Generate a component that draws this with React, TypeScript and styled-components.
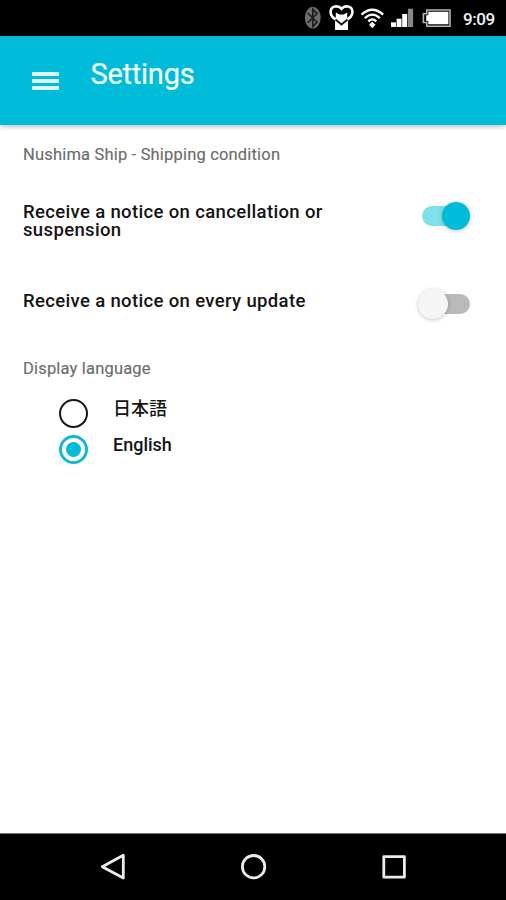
import React, { useState } from 'react';
import styled, { createGlobalStyle } from 'styled-components';

const GlobalStyle = createGlobalStyle`
  * { box-sizing: border-box; }
  body { margin: 0; background: #fff; font-family: Roboto, "Noto Sans CJK JP", sans-serif; }
`;

const Screen = styled.div`
  width: 506px;
  height: 900px;
  display: flex;
  flex-direction: column;
  background: #fff;
  overflow: hidden;
`;

const StatusBar = styled.div`
  height: 36px;
  flex: none;
  display: flex;
  align-items: flex-start;
  padding-left: 304px;
  background: #000;
`;

const StatusIcon = styled.svg<{ $gap: number }>`
  display: block;
  flex: none;
  height: 36px;
  margin-right: ${(p) => p.$gap}px;
`;

const Clock = styled.span`
  color: #f2f2f2;
  font-size: 17px;
  font-weight: 500;
  line-height: 38px;
  letter-spacing: -0.45px;
`;

const AppBar = styled.header`
  height: 89px;
  flex: none;
  display: flex;
  align-items: flex-start;
  padding: 20px 0 0 32px;
  background: #00bcd9;
  box-shadow: 0 1px 5px rgba(0, 0, 0, 0.32);
`;

const MenuButton = styled.button`
  width: 27px;
  height: 20px;
  margin-top: 15.5px;
  padding: 0;
  border: 0;
  background: none;
  display: flex;
  flex-direction: column;
  gap: 3.4px;
`;

const MenuLine = styled.span`
  width: 27px;
  height: 4px;
  background: #def5f9;
`;

const Title = styled.h1`
  margin: 0 0 0 31.5px;
  color: #f4fdff;
  font-size: 29px;
  font-weight: 400;
  line-height: 36px;
  letter-spacing: -0.25px;
  -webkit-text-stroke: 0.2px #f4fdff;
`;

const Content = styled.main`
  flex: 1;
  padding: 19px 36px 0 23px;
`;

const SectionTitle = styled.h2`
  margin: 0;
  color: #6c6c6c;
  font-size: 16.5px;
  font-weight: 400;
  line-height: 22px;
  letter-spacing: 0.18px;
  -webkit-text-stroke: 0.15px #6c6c6c;
`;

const LanguageHeading = styled(SectionTitle)`
  margin-top: 44px;
`;

const SettingRow = styled.div<{ $top: number }>`
  display: flex;
  justify-content: space-between;
  align-items: flex-start;
  margin-top: ${(p) => p.$top}px;
`;

const SettingLabel = styled.span`
  width: 325px;
  color: #141414;
  font-size: 18.5px;
  font-weight: 500;
  line-height: 18px;
  letter-spacing: 0.35px;
`;

const Track = styled.button<{ $on: boolean }>`
  width: 48px;
  height: 20px;
  flex: none;
  display: flex;
  align-items: center;
  justify-content: ${(p) => (p.$on ? 'flex-end' : 'flex-start')};
  margin-top: ${(p) => (p.$on ? 3 : 2)}px;
  padding: 0;
  border: 0;
  border-radius: 10px;
  background: ${(p) => (p.$on ? '#80dfe8' : '#b9b9b9')};
`;

const Thumb = styled.span<{ $on: boolean }>`
  width: ${(p) => (p.$on ? 28 : 30)}px;
  height: ${(p) => (p.$on ? 28 : 30)}px;
  flex: none;
  margin-left: ${(p) => (p.$on ? 0 : -4)}px;
  border-radius: 50%;
  background: ${(p) => (p.$on ? '#00bcd9' : '#f5f5f5')};
  box-shadow: 0 1px 4px rgba(0, 0, 0, 0.22);
`;

const LanguageList = styled.div`
  display: flex;
  flex-direction: column;
  padding: 16px 0 0 36px;
`;

const LanguageOption = styled.div`
  height: 35.5px;
  display: flex;
  align-items: flex-start;
`;

const RadioRing = styled.button<{ $selected: boolean }>`
  width: 29px;
  height: 29px;
  flex: none;
  margin-top: 3px;
  padding: 0;
  display: flex;
  align-items: center;
  justify-content: center;
  border: ${(p) => (p.$selected ? '3px solid #14b8d3' : '2px solid #181818')};
  border-radius: 50%;
  background: transparent;
`;

const RadioDot = styled.span`
  width: 15px;
  height: 15px;
  border-radius: 50%;
  background: #00bcd9;
`;

const LanguageName = styled.span`
  margin-left: 25px;
  color: #141414;
  font-size: 18px;
  font-weight: 500;
  line-height: 26px;
`;

const NavBar = styled.nav`
  height: 67px;
  flex: none;
  display: flex;
  align-items: center;
  justify-content: space-between;
  padding: 0 98px 0 100px;
  border-top: 1px solid #777;
  background: #000;
`;

const NavIcon = styled.svg`
  display: block;
  width: 28px;
  height: 28px;
  fill: none;
  stroke: #ececec;
  stroke-width: 2.8;
  stroke-linejoin: round;
`;

const StatusIcons = () => (
  <>
    <StatusIcon width="18" viewBox="304 0 18 36" $gap={6}>
      <ellipse cx="312.8" cy="17.8" rx="7.9" ry="11" fill="#6c6c6c" />
      <path d="M307.8 13l9.2 9.2-4.2 4.3V9.3l4.2 4.2-9.2 9.2" fill="none" stroke="#1c1c1c" strokeWidth="1.6" />
    </StatusIcon>
    <StatusIcon width="27" viewBox="328 0 27 36" $gap={5}>
      <path d="M335 20V30H348V20Z" fill="#fff" />
      <path
        d="M341.5 8.8C338.5 5 330.6 5.4 330.6 12C330.6 17 334 18.5 337 20H346C349 18.5 352.4 17 352.4 12C352.4 5.4 344.5 5 341.5 8.8Z"
        fill="#000"
        stroke="#fff"
        strokeWidth="2.6"
      />
      <path d="M335.8 12.6L339.3 14.6H343.7L347.2 12.6V19.5L341.5 24L335.8 19.5Z" fill="#fff" />
      <path d="M335.5 19.6L341.5 24.6L347.5 19.6" fill="none" stroke="#151515" strokeWidth="1.9" />
    </StatusIcon>
    <StatusIcon width="25" viewBox="360 0 25 36" $gap={5}>
      <g fill="none" stroke="#fff" strokeWidth="2.3">
        <path d="M361.5 14.6Q372.3 4.8 383.2 14.6" />
        <path d="M364.8 18.2Q372.3 11 379.8 18.2" />
        <path d="M368.3 21.4Q372.3 17.4 376.3 21.4" />
      </g>
      <path d="M372.3 21.8L375.5 24.8L372.3 28.2L369.1 24.8Z" fill="#fff" />
    </StatusIcon>
    <StatusIcon width="24" viewBox="390 0 24 36" $gap={8}>
      <g fill="#fff">
        <path d="M391 22.3h4.9V27H391z" />
        <path d="M396.6 18.7h4.9V27h-4.9z" />
        <path d="M402.2 14h5v13h-5z" />
      </g>
      <path d="M408 8.7h5.1V27H408z" fill="#888" />
    </StatusIcon>
    <StatusIcon width="30" viewBox="422 0 30 36" $gap={11}>
      <path d="M426.8 10H450v16.2H426.8V22.5H423.4V13.8H426.8Z" fill="none" stroke="#b4b4b4" strokeWidth="1.6" />
      <path d="M428.3 11.8H448.4V24.3H428.3V21H426.2V15.3H428.3Z" fill="#fff" />
    </StatusIcon>
  </>
);

const Toggle = ({ initial, label }: { initial: boolean; label: string }) => {
  const [on, setOn] = useState(initial);
  return (
    <Track $on={on} role="switch" aria-checked={on} aria-label={label} onClick={() => setOn(!on)}>
      <Thumb $on={on} />
    </Track>
  );
};

export default function App() {
  const [language, setLanguage] = useState('English');
  return (
    <Screen>
      <GlobalStyle />
      <StatusBar>
        <StatusIcons />
        <Clock>9:09</Clock>
      </StatusBar>
      <AppBar>
        <MenuButton aria-label="Menu">
          <MenuLine />
          <MenuLine />
          <MenuLine />
        </MenuButton>
        <Title>Settings</Title>
      </AppBar>
      <Content>
        <SectionTitle>Nushima Ship - Shipping condition</SectionTitle>
        <SettingRow $top={37}>
          <SettingLabel>Receive a notice on cancellation or suspension</SettingLabel>
          <Toggle initial label="Cancellation or suspension" />
        </SettingRow>
        <SettingRow $top={53}>
          <SettingLabel>Receive a notice on every update</SettingLabel>
          <Toggle initial={false} label="Every update" />
        </SettingRow>
        <LanguageHeading>Display language</LanguageHeading>
        <LanguageList>
          {['日本語', 'English'].map((name) => (
            <LanguageOption key={name}>
              <RadioRing
                $selected={language === name}
                role="radio"
                aria-checked={language === name}
                aria-label={name}
                onClick={() => setLanguage(name)}
              >
                {language === name && <RadioDot />}
              </RadioRing>
              <LanguageName>{name}</LanguageName>
            </LanguageOption>
          ))}
        </LanguageList>
      </Content>
      <NavBar>
        <NavIcon viewBox="0 0 28 28">
          <path d="M2.3 13.7L23.3 2.3V25.1Z" />
        </NavIcon>
        <NavIcon viewBox="0 0 28 28">
          <circle cx="13.6" cy="13.7" r="11.2" />
        </NavIcon>
        <NavIcon viewBox="0 0 28 28">
          <rect x="3.8" y="3.6" width="20.6" height="20.6" />
        </NavIcon>
      </NavBar>
    </Screen>
  );
}
